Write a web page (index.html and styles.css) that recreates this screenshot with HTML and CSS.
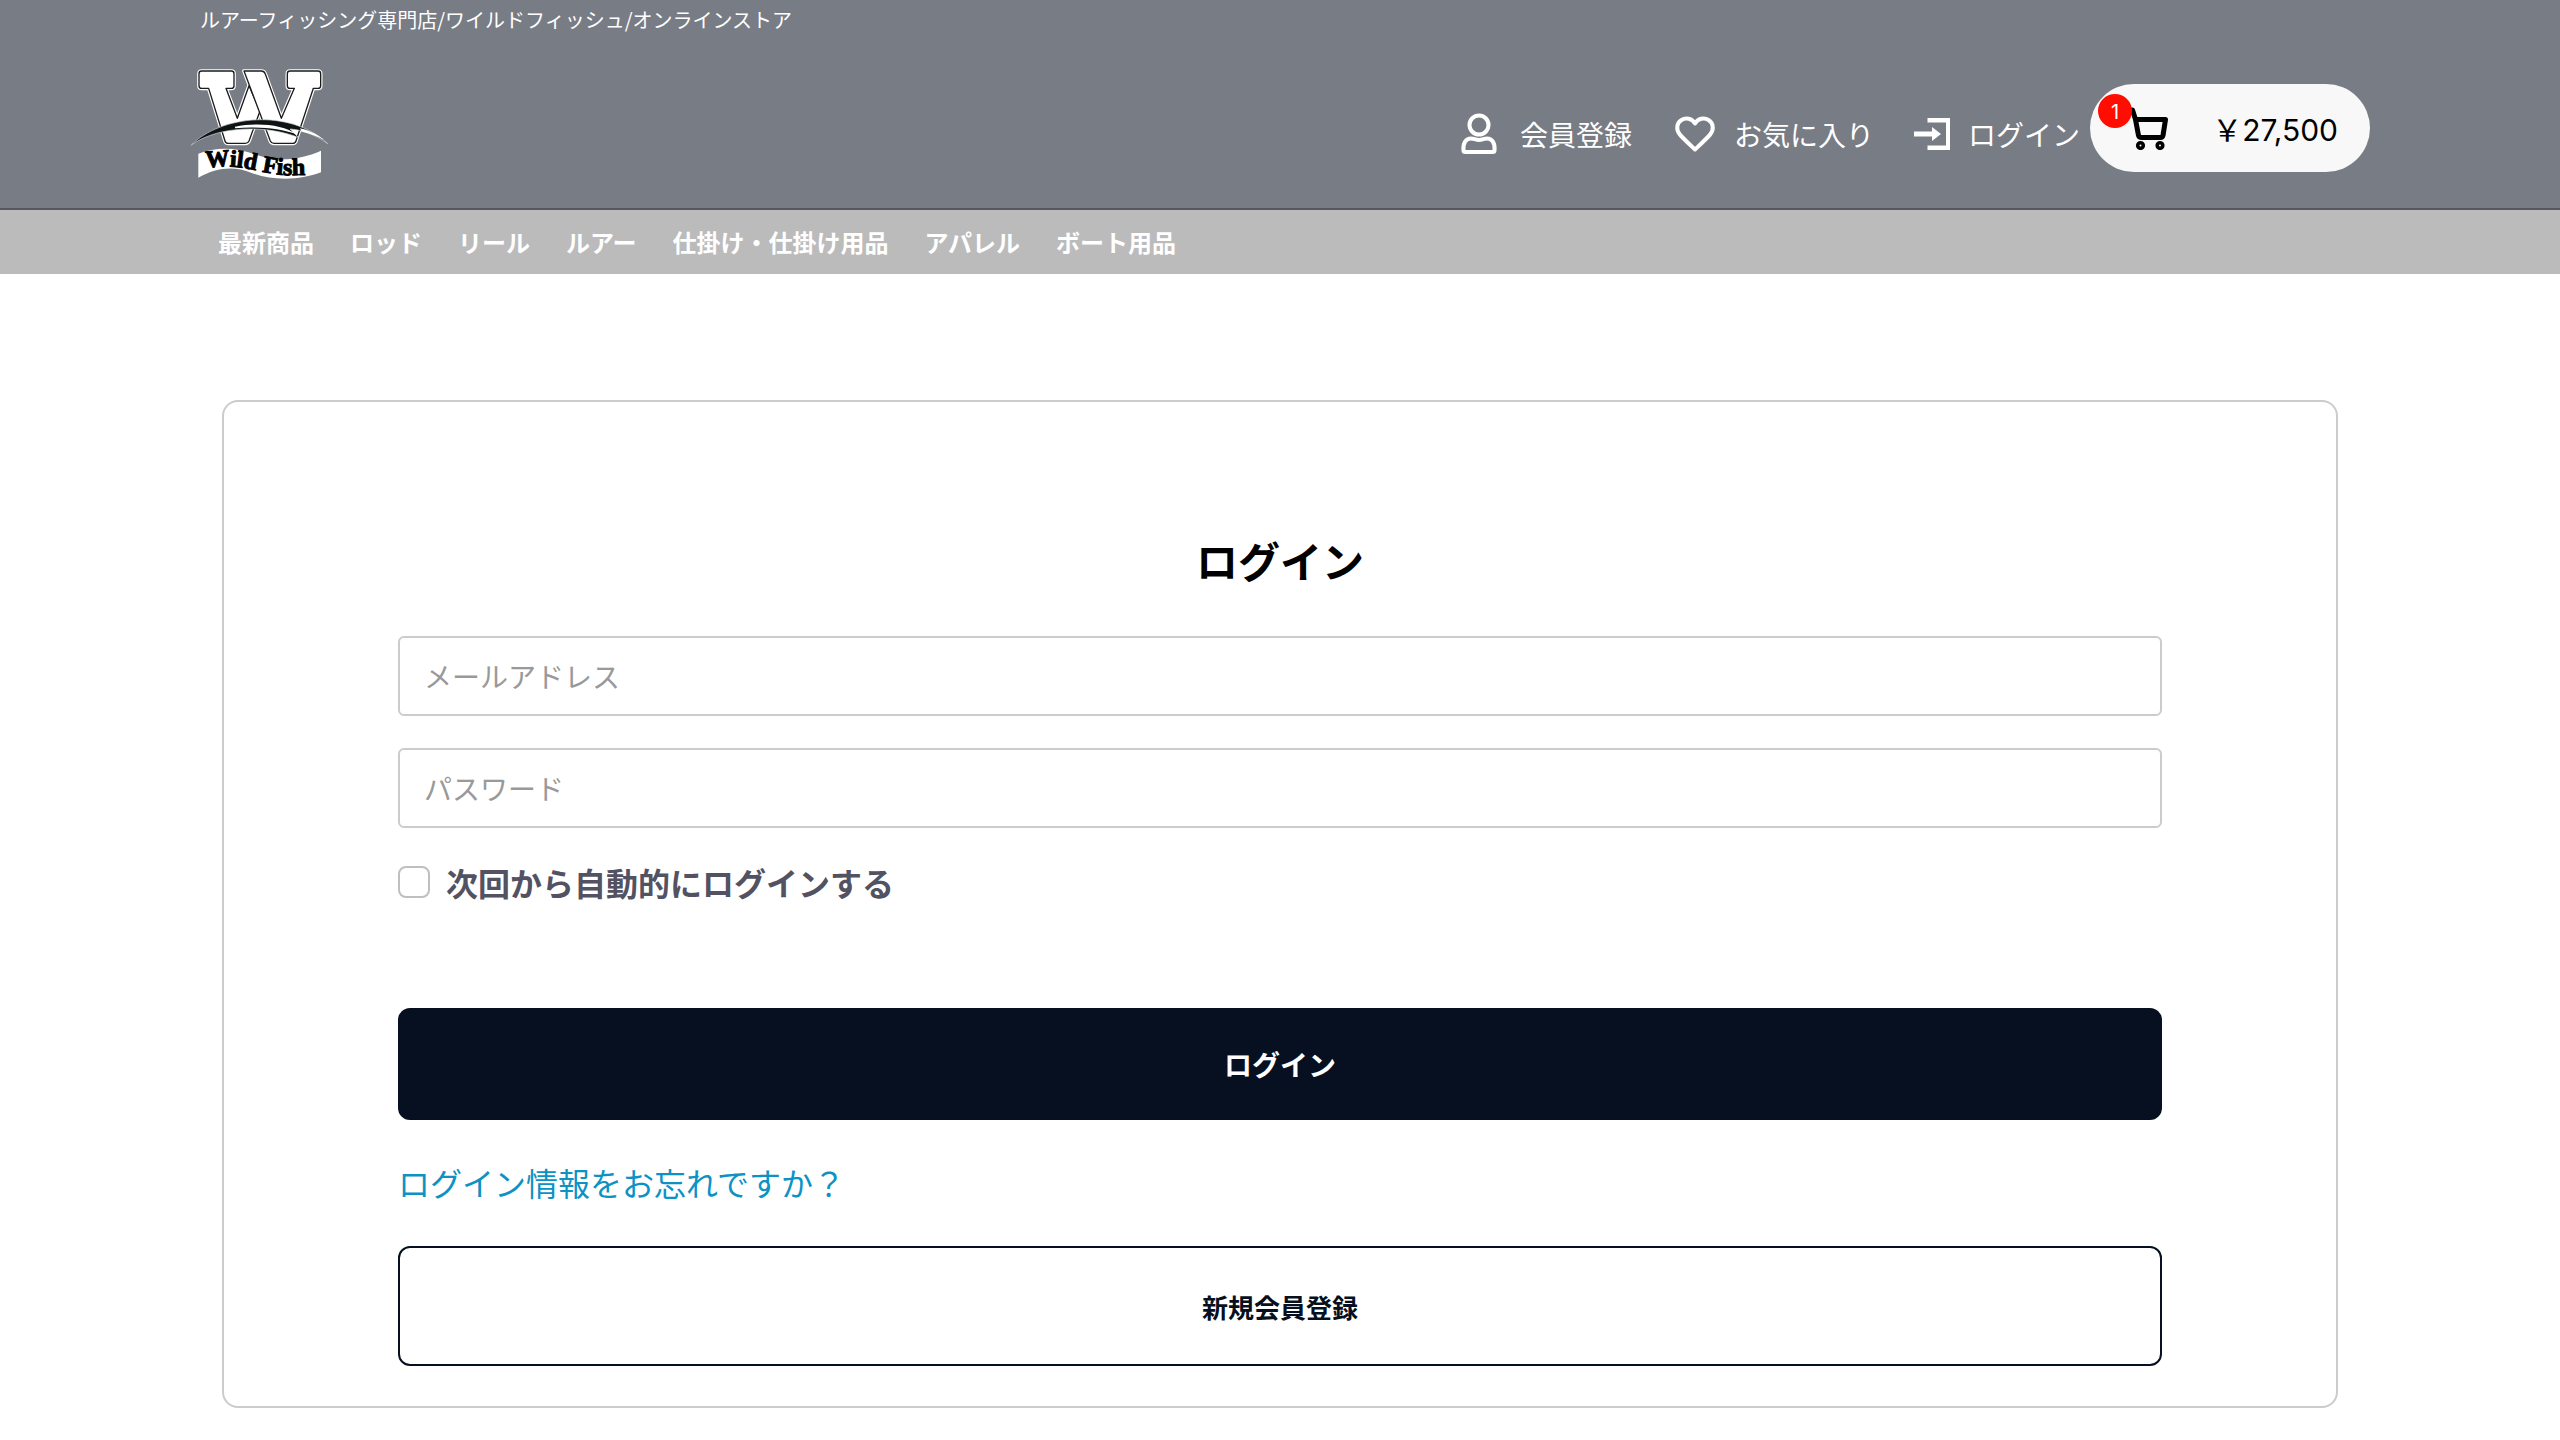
FILE: index.html
```html
<!DOCTYPE html>
<html lang="ja">
<head>
<meta charset="utf-8">
<meta name="viewport" content="width=device-width, initial-scale=1">
<title>ログイン</title>
<link rel="stylesheet" href="styles.css">
</head>
<body>
<header class="header">
  <p class="tagline">ルアーフィッシング専門店/ワイルドフィッシュ/オンラインストア</p>
  <div class="header-main">
    <a class="logo" href="#" aria-label="Wild Fish">
      <svg class="logo-mark" viewBox="30 36 420 342" aria-hidden="true">
        <defs>
          <path id="left-stroke" d="M65 48H154Q162 48 162 56V92Q162 100 154 100H138L172 190L207 92L240 168L207 258Q204 265 196 265H145Q137 265 135 258L86 100H65Q57 100 57 92V56Q57 48 65 48Z"/>
          <path id="right-stroke" d="M192 48H244Q253 48 256 57L304 190L343 100H330Q322 100 322 92V56Q322 48 330 48H414Q422 48 422 56V92Q422 100 414 100H400L348 258Q346 265 338 265H282Q274 265 271 258Z"/>
          <path id="ribbon-line" d="M78 340C130 328 190 336 245 350C300 362 345 364 430 356"/>
        </defs>
        <g stroke-linejoin="round">
          <use href="#left-stroke" fill="#fff" stroke="#fff" stroke-width="11"/>
          <use href="#right-stroke" fill="#fff" stroke="#fff" stroke-width="11"/>
          <use href="#left-stroke" fill="#fff" stroke="#1b1b1b" stroke-width="4"/>
          <use href="#right-stroke" fill="#fff" stroke="#1b1b1b" stroke-width="4"/>
        </g>
        <path d="M34 270C120 182 330 158 443 266C400 235 360 224 330 222L356 248C270 212 120 208 34 270Z" fill="#0d1413" stroke="#d5d8dc" stroke-width="2"/>
        <path d="M165 215C230 202 310 208 350 238C300 220 230 214 165 220Z" fill="#fff"/>
        <path d="M360 220C395 228 418 242 432 255C410 243 385 234 365 230Z" fill="#fff"/>
        <path d="M55 296C110 275 170 278 225 298C290 322 360 315 423 287V352C360 376 280 378 215 354C160 332 110 338 55 368Z" fill="#fff"/>
        <text class="logo-text"><textPath href="#ribbon-line">Wild Fish</textPath></text>
      </svg>
    </a>
    <nav class="account" aria-label="アカウント">
      <a class="account-link" href="#">
        <svg class="icon" viewBox="0 0 44 44" aria-hidden="true"><g fill="none" stroke="#fff" stroke-width="4" stroke-linejoin="round"><circle cx="21" cy="13" r="9.5"/><path d="M5.500 38.500C4.800 31 8 26.500 13 26.500C16 26.500 17.500 28 21 28C24.500 28 26 26.500 29 26.500C34 26.500 37.200 31 36.500 38.500Q36.500 40 34.500 40H7.500Q5.500 40 5.500 38.500Z"/></g></svg>
        <span>会員登録</span>
      </a>
      <a class="account-link" href="#">
        <svg class="icon" viewBox="0 0 44 44" aria-hidden="true"><path d="M23 37.500C21 35.500 10 25.500 7.500 22C4 17.500 4.500 11 9.500 8C14 5 20 6.500 23 11.500C26 6.500 32 5 36.500 8C41.500 11 42 17.500 38.500 22C36 25.500 25 35.500 23 37.500Z" fill="none" stroke="#fff" stroke-width="4" stroke-linejoin="round"/></svg>
        <span>お気に入り</span>
      </a>
      <a class="account-link" href="#">
        <svg class="icon icon-narrow" viewBox="0 0 36 44" aria-hidden="true"><path d="M13.500 6H36V38H13.500V33.500H32V10.500H13.500ZM0 19.500H18V15L27 22L18 29V24.500H0Z" fill="#fff"/></svg>
        <span>ログイン</span>
      </a>
    </nav>
    <a class="cart" href="#">
      <span class="cart-icon-wrap">
        <svg class="icon" viewBox="0 0 44 44" aria-hidden="true"><g fill="none" stroke="#000" stroke-width="5" stroke-linejoin="round" stroke-linecap="round"><path d="M0 4H4.500L7.500 13.500H37.500L35 29.500Q34.500 31.500 32.500 31.500H13.500Q11 31.500 10.500 29.500L7.500 13.500"/><circle cx="12.500" cy="39.500" r="2.800" stroke-width="3.600"/><circle cx="32" cy="39.500" r="2.800" stroke-width="3.600"/></g></svg>
        <span class="badge">1</span>
      </span>
      <span class="cart-total">￥27,500</span>
    </a>
  </div>
</header>
<nav class="categories" aria-label="カテゴリ">
  <a href="#">最新商品</a>
  <a href="#">ロッド</a>
  <a href="#">リール</a>
  <a href="#">ルアー</a>
  <a href="#">仕掛け・仕掛け用品</a>
  <a href="#">アパレル</a>
  <a href="#">ボート用品</a>
</nav>
<main class="main">
  <form class="card">
    <h1 class="title">ログイン</h1>
    <div class="fields">
      <input class="field" type="email" placeholder="メールアドレス" aria-label="メールアドレス">
      <input class="field" type="password" placeholder="パスワード" aria-label="パスワード">
    </div>
    <label class="remember"><input class="checkbox" type="checkbox">次回から自動的にログインする</label>
    <button class="button button-primary" type="submit">ログイン</button>
    <a class="forgot" href="#">ログイン情報をお忘れですか？</a>
    <button class="button button-outline" type="button">新規会員登録</button>
  </form>
</main>
</body>
</html>
```
FILE: styles.css
```css
* {
  box-sizing: border-box;
}

body {
  margin: 0;
  background: #fff;
  color: #000;
  font-family: "Noto Sans CJK JP", sans-serif;
  font-size: 28px;
}

a {
  color: inherit;
  text-decoration: none;
}

.header {
  padding: 0 190px;
  border-bottom: 2px solid #55585e;
  background: #787c85;
  color: #fff;
}

.tagline {
  margin: 0;
  padding-left: 10px;
  font-size: 20px;
  line-height: 40px;
}

.header-main {
  display: flex;
  align-items: center;
  min-height: 168px;
  padding-top: 8px;
}

.logo {
  display: block;
  margin: 0 auto 8px 0;
}

.logo-mark {
  display: block;
  width: 140px;
  height: 114px;
}

.logo-text {
  fill: #000;
  stroke: #000;
  stroke-width: 3px;
  font-family: "Liberation Serif", serif;
  font-size: 72px;
  font-weight: 700;
}

.account {
  display: flex;
  gap: 40px;
  margin-right: 10px;
  padding-top: 12px;
}

.account-link {
  display: flex;
  align-items: center;
  gap: 18px;
  line-height: 44px;
}

.icon {
  display: block;
  width: 44px;
  height: 44px;
}

.icon-narrow {
  width: 36px;
}

.cart {
  display: flex;
  align-items: center;
  justify-content: space-between;
  width: 280px;
  height: 88px;
  padding: 0 32px 0 38px;
  border-radius: 44px;
  background: #f8f8f8;
  color: #000;
}

.cart-icon-wrap {
  position: relative;
}

.badge {
  position: absolute;
  top: -12px;
  left: -30px;
  width: 34px;
  height: 34px;
  border-radius: 50%;
  background: #ff0d00;
  color: #fff;
  font-family: Inter, sans-serif;
  font-size: 20px;
  line-height: 36px;
  text-align: center;
}

.cart-total {
  font-family: Inter, "Noto Sans CJK JP", sans-serif;
  font-size: 30px;
}

.categories {
  display: flex;
  flex-wrap: wrap;
  gap: 0 36px;
  padding: 0 218px;
  background: #bbb;
  color: #fff;
  font-size: 24px;
  font-weight: 700;
  line-height: 64px;
}

.main {
  padding: 126px 222px 32px;
}

.card {
  display: flex;
  flex-direction: column;
  padding: 126px 174px 40px;
  border: 2px solid #ccc;
  border-radius: 16px;
}

.title {
  margin: 0 0 44px;
  font-size: 42px;
  font-weight: 700;
  line-height: 64px;
  text-align: center;
}

.fields {
  display: flex;
  flex-direction: column;
  gap: 32px;
}

.field {
  width: 100%;
  height: 80px;
  padding: 0 24px;
  border: 2px solid #ccc;
  border-radius: 6px;
  background: #fff;
  font: inherit;
}

.field::placeholder {
  color: #999;
  opacity: 1;
}

.remember {
  display: flex;
  align-items: center;
  align-self: flex-start;
  gap: 16px;
  margin: 32px 0 104px;
  color: #525263;
  font-size: 32px;
  font-weight: 700;
  line-height: 44px;
}

.checkbox {
  width: 32px;
  height: 32px;
  margin: 0;
  border: 2px solid #bfbfbf;
  border-radius: 8px;
  background: #fff;
  appearance: none;
}

.button {
  width: 100%;
  border: 2px solid #061020;
  border-radius: 12px;
  font: inherit;
  font-weight: 700;
}

.button-primary {
  height: 112px;
  background: #061020;
  color: #fff;
}

.button-outline {
  height: 120px;
  background: #fff;
  color: #061020;
  font-size: 26px;
}

.forgot {
  align-self: flex-start;
  margin: 38px 0 40px;
  color: #0d92c4;
  font-size: 32px;
  line-height: 48px;
}
```
